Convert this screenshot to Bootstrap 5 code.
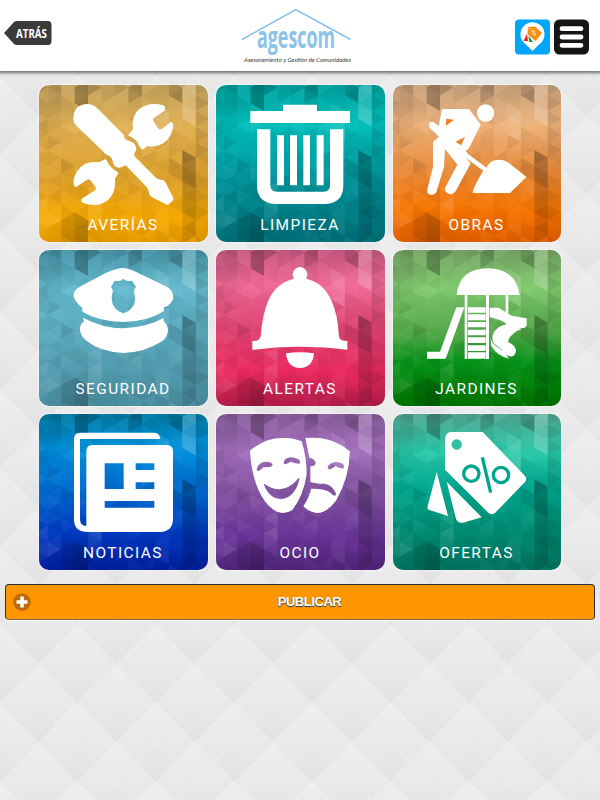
<!DOCTYPE html>
<html lang="es">
<head>
<meta charset="utf-8">
<meta name="viewport" content="width=device-width, initial-scale=1">
<title>agescom</title>
<link href="https://cdn.jsdelivr.net/npm/bootstrap@5.3.0/dist/css/bootstrap.min.css" rel="stylesheet">
<style>
body{min-height:800px;font-family:"Liberation Sans",Arial,sans-serif;background-color:#e8e8e8;
background-image:url("data:image/svg+xml,%3Csvg xmlns='http://www.w3.org/2000/svg' width='78.3' height='78.3' viewBox='0 0 78 78'%3E%3Cdefs%3E%3ClinearGradient id='g' x2='0' y2='1'%3E%3Cstop stop-color='%23eeeeee'/%3E%3Cstop offset='.6' stop-color='%23e8e8e8'/%3E%3Cstop offset='1' stop-color='%23e2e2e2'/%3E%3C/linearGradient%3E%3Cg id='d'%3E%3Cpath d='M0-39L39 0 0 39-39 0z' fill='url(%23g)'/%3E%3Cpath d='M-39 0L0-39 39 0M-19.500-19.500L19.500 19.500M19.500-19.500L-19.500 19.500' fill='none' stroke='%23fff' stroke-opacity='.3' stroke-width='.7'/%3E%3C/g%3E%3C/defs%3E%3Cuse href='%23d' x='39'/%3E%3Cuse href='%23d' x='39' y='78'/%3E%3Cuse href='%23d' y='39'/%3E%3Cuse href='%23d' x='78' y='39'/%3E%3C/svg%3E");background-position:-1px -1.400px}
.topbar{height:71px;padding:0 11px 0 4px;box-shadow:0 1px 3px 1px #68706a}
.logo-mark{margin-left:175px}
.tiles{width:522px;margin:14px auto 0;grid-template-columns:169px 169px 168px;grid-template-rows:157px 156px 156px;gap:8px}
.tile{border-radius:10px;color:#fff;font:15.400px/18px Roboto,sans-serif;letter-spacing:1.450px;padding-bottom:8px;box-shadow:0 0 1px 1px rgba(255,255,255,.45)}
.tile:hover{color:#fff}
.tile>svg{width:169px;height:157px}
.tile>span{z-index:1;padding-right:1px}
.t-averias{background:linear-gradient(#c6a45f,#e2b050 28%,#dda02a 60%,#f8aa00 85%,#e59b00)}
.t-limpieza{background:linear-gradient(#00a3a0,#00bfba 25%,#009399 60%,#006f79)}
.t-obras{background:linear-gradient(#c9a27d,#edb27a 25%,#e98a39 55%,#f87500 80%,#e25f00)}
.t-seguridad{background:linear-gradient(#4795a8,#64bace 25%,#56a3b6 65%,#4a8fa2)}
.t-alertas{background:linear-gradient(#c85882,#f06a95 22%,#dd416f 52%,#eb2b60 78%,#b51c49)}
.t-jardines{background:linear-gradient(#76a665,#80ca6d 25%,#51a747 53%,#069319 72%,#007400)}
.t-noticias{background:linear-gradient(#007ca4,#0092de 22%,#0069cf 50%,#0037be 78%,#001f9d)}
.t-ocio{background:linear-gradient(#8c5f9f,#a36fbd 25%,#8051a0 52%,#6b369a 78%,#51257b)}
.t-ofertas{background:linear-gradient(#51a893,#27c8a8 25%,#00a68d 48%,#008d74 75%,#00735e)}
.publish{width:590px;height:36px;margin:13.500px auto 0;background:#ff9600;border:1px solid #253038;border-bottom-color:#7c6a50;border-radius:4px;color:#fff;font-weight:700;font-size:13px;letter-spacing:-.45px;text-shadow:0 1px 1px #123a58;box-shadow:0 1px 0 #fff;padding:0 7px}
.publish:hover{color:#fff}
.publish>span{padding-left:1px}
</style>
</head>
<body>
<header class="topbar bg-white d-flex align-items-center">
 <a href="#" aria-label="Atrás" class="d-flex"><svg width="53" height="71" viewBox="4 0 53 71"><path d="M4 33L14 22Q15 21 17 21H48Q51.500 21 51.500 25V41Q51.500 45 48 45H17Q15 45 14 44Z" fill="#3b3b3b"/><text x="16" y="38" textLength="31" lengthAdjust="spacingAndGlyphs" font-family="Open Sans,sans-serif" font-weight="700" font-size="13" fill="#fff">ATRÁS</text></svg></a>
 <svg class="logo-mark" width="132" height="71" viewBox="232 0 132 71"><path d="M242 39.500L295.800 9.700 350.500 39.500" fill="none" stroke="#82c0ec" stroke-width="1.500"/><text x="257" y="48.300" textLength="78" lengthAdjust="spacingAndGlyphs" font-family="Open Sans,sans-serif" font-weight="700" font-size="29.500" fill="#8bc3ea">agescom</text><text x="244" y="62.300" textLength="107" lengthAdjust="spacingAndGlyphs" font-family="Lato,sans-serif" font-style="italic" font-weight="400" font-size="6.200" fill="#3a3a3a">Asesoramiento y Gestión de Comunidades</text></svg>
 <div class="d-flex ms-auto gap-1">
  <a href="#" aria-label="Ofertas cercanas" class="d-flex"><svg width="35" height="71" viewBox="515 0 35 71"><rect x="515" y="19.500" width="35" height="35" rx="4" fill="#00a6fa"/><path d="M532.500 51L524 42.800A12 12 0 1 1 541 42.800Z" fill="#fff"/><path d="M528 27L535 26.500 542 33 535.500 41 527.500 34Z" fill="#fa8b13"/><path d="M527 34L523.500 41H528Z" fill="#ed1c24"/><path d="M528.500 35.500L533 42H529Z" fill="#13a538"/><circle cx="529.300" cy="28.800" r=".8" fill="#fff"/><text x="531" y="35.500" transform="rotate(10 535 32)" font-family="Roboto,sans-serif" font-size="7.500" fill="#fff">%</text></svg></a>
  <a href="#" aria-label="Menú" class="d-flex"><svg width="35" height="71" viewBox="554 0 35 71"><rect x="554" y="19.500" width="35" height="35" rx="5.500" fill="#151515"/><path d="M562 28.700H581M562 37H581M562 45.300H581" stroke="#fff" stroke-width="4.800" stroke-linecap="round"/></svg></a>
 </div>
</header>
<main>
<nav class="tiles d-grid">
 <a href="#" class="tile t-averias position-relative overflow-hidden text-decoration-none d-flex justify-content-center align-items-end"><svg class="position-absolute top-0 start-0" viewBox="15 15 507 471"><g class="facets"></g><g fill="#fff"><path d="M118 118Q118 72 162 72Q179 73 193 88L270 165Q270 178 280 181Q300 185 306 200Q309 209 301 220V228L367 295Q377 300 389 301Q394 304 397 312L418 354Q420 359 415 363L404 373Q400 376 395 373L352 350Q345 346 345 339Q345 330 338 321L275 256Q255 269 243 259Q237 253 235 240Q230 226 220 226Q210 220 205 212L128 138Q118 128 118 118Z"/><path d="M282 166L297 148Q290 108 318 85Q350 65 387 76Q397 80 391 92L360 114Q355 118 359 124L372 145Q376 151 384 146L411 126Q419 125 417 145Q408 185 375 196Q355 202 341 198L325 209Q316 202 314 195Q308 178 282 166Z"/><path d="M214 237Q219 240 222 248Q228 262 254 278L243 297Q248 338 220 362Q190 382 150 370Q140 366 142 357L180 333Q188 329 185 322L168 299Q161 297 155 302L126 321Q115 320 120 294Q135 252 170 247L197 246Z"/></g></svg><span>AVERÍAS</span></a>

 <a href="#" class="tile t-limpieza position-relative overflow-hidden text-decoration-none d-flex justify-content-center align-items-end"><svg class="position-absolute top-0 start-0" viewBox="18 15 507 471"><g class="facets"></g><path fill="#fff" d="M121 93H219V74H321V93H420V129H121ZM141 148H181V316Q181 335 200 335H341Q360 335 360 316V148H400V316Q400 372 342 372H200Q141 372 141 316ZM201 166H222V316H201ZM240 166H261V316H240ZM280 166H300V316H280ZM320 166H341V316H320Z"/></svg><span>LIMPIEZA</span></a>

 <a href="#" class="tile t-obras position-relative overflow-hidden text-decoration-none d-flex justify-content-center align-items-end"><svg class="position-absolute top-0 start-0" viewBox="21 15 507 471"><g class="facets"></g><g fill="#fff"><circle cx="299" cy="99" r="26"/><path d="M168 87H249L284 134L248 206L239 212L246 222L302 263Q310 239 340 239Q356 239 369 249L421 291L372 339H260Q261 322 292 272L237 232L254 250L209 334Q200 347 184 340Q173 332 180 318L214 254L177 207L174 261L151 337Q143 348 129 343Q122 338 124 328L141 261V185L159 170L131 143Q126 134 132 127Q140 123 146 129L158 139Z"/><path fill="#f08020" d="M181 116L179 138L204 119ZM209 185L225 196L237 171Z"/></g></svg><span>OBRAS</span></a>

 <a href="#" class="tile t-seguridad position-relative overflow-hidden text-decoration-none d-flex justify-content-center align-items-end"><svg class="position-absolute top-0 start-0" viewBox="15 15 507 471"><g class="facets"></g><g fill="#fff"><path fill-rule="evenodd" d="M268 69Q285 69 325 90L398 125Q418 136 418 156Q416 178 390 187V198Q340 230 268 231Q196 230 145 200V188Q120 170 119 150Q120 135 136 126L215 84Q250 69 268 69ZM268 101Q262 110 242 107L231 126Q240 136 234 149Q228 190 268 205Q309 190 302 149Q297 136 306 126L294 107Q275 110 268 101Z"/><path d="M147 218Q205 249 268 250Q335 248 389 219V229Q402 240 402 257Q400 276 385 288Q330 323 268 324Q200 322 155 286Q136 268 138 248Q140 235 150 230Z"/></g></svg><span>SEGURIDAD</span></a>

 <a href="#" class="tile t-alertas position-relative overflow-hidden text-decoration-none d-flex justify-content-center align-items-end"><svg class="position-absolute top-0 start-0" viewBox="18 15 507 471"><g class="facets"></g><path fill="#fff" d="M252 101A22 22 0 1 1 288 101Q340 112 364 166Q384 210 387 276Q391 289 412 288V314Q340 304 270 305Q200 304 127 315V288Q149 290 152 274Q157 207 176 164Q201 112 252 101ZM228 325Q270 319 312 325Q308 369 270 369Q232 369 228 325Z"/></svg><span>ALERTAS</span></a>

 <a href="#" class="tile t-jardines position-relative overflow-hidden text-decoration-none d-flex justify-content-center align-items-end"><svg class="position-absolute top-0 start-0" viewBox="21 15 507 471"><g class="facets"></g><g fill="#fff"><path d="M212 150Q220 70 307 70Q390 72 401 150ZM211 187H235L179 341H123V320H162Z"/><path d="M236 150H244V342H236ZM300 150H309V342H300ZM359 150H367V300H359ZM246 187H299V203H246ZM246 208H299V226H246ZM246 231H299V247H246ZM246 254H299V271H246ZM246 277H299V294H246ZM246 301H299V318H246ZM246 322H299V341H246Z"/><path d="M311 188H338L377 212L422 220V240Q420 250 410 249L387 250L343 226L311 216Z"/><path d="M408 252Q375 262 364 291Q390 299 390 320Q382 343 363 330L358 337Q350 310 330 301Q316 290 320 270Q332 240 366 238ZM313 276Q317 298 337 307Q356 323 370 341Q334 334 316 303Z"/></g></svg><span>JARDINES</span></a>

 <a href="#" class="tile t-noticias position-relative overflow-hidden text-decoration-none d-flex justify-content-center align-items-end"><svg class="position-absolute top-0 start-0" viewBox="15 15 507 471"><g class="facets"></g><path fill="#fff" fill-rule="evenodd" d="M138 71H360Q378 72 379 90H138V331Q138 350 157 351V127Q157 108 176 108H398Q417 108 417 127V332Q415 367 379 369H157Q120 367 120 331V90Q120 72 138 71ZM212 163V240H269V163ZM305 163V183H361V163ZM305 220V240H361V220ZM212 276V296H361V276Z"/></svg><span>NOTICIAS</span></a>

 <a href="#" class="tile t-ocio position-relative overflow-hidden text-decoration-none d-flex justify-content-center align-items-end"><svg class="position-absolute top-0 start-0" viewBox="18 15 507 471"><g class="facets"></g><path fill="#fff" fill-rule="evenodd" d="M120 125Q165 86 220 87Q250 86 275 97Q290 145 290 196Q281 260 247 303Q233 312 219 312Q190 311 164 276Q125 220 120 125ZM141 178Q139 187 147 186L160 175L180 174Q190 171 187 164Q177 155 158 160Q144 166 141 178ZM221 160Q221 169 230 164L242 158Q258 164 268 164Q274 157 265 151Q242 138 225 151ZM161 225Q178 271 216 270Q256 265 269 208Q264 206 260 214Q217 261 163 225ZM286 87Q305 86 330 87Q382 94 420 127Q417 210 378 275Q349 313 320 312Q297 309 280 292Q300 260 303 239Q341 238 357 248L369 258Q377 264 378 254Q369 229 344 224Q322 226 301 219V171Q316 174 317 160Q310 147 298 146ZM353 172Q353 185 365 179L376 171Q388 178 399 179Q406 173 398 164Q371 151 353 172Z"/></svg><span>OCIO</span></a>

 <a href="#" class="tile t-ofertas position-relative overflow-hidden text-decoration-none d-flex justify-content-center align-items-end"><svg class="position-absolute top-0 start-0" viewBox="21 15 507 471"><g class="facets"></g><path fill="#fff" fill-rule="evenodd" d="M193 69H290L417 201Q424 210 417 219L327 312Q318 319 308 312L177 182V90Q178 72 193 69ZM212 91A15.500 15.500 0 1 0 212.100 91ZM152 189L186 321L128 302Q122 298 126 288ZM182 218L287 325L231 341Q214 344 209 326Z"/><g fill="none" stroke="#00a58d" stroke-width="10"><circle cx="256" cy="194" r="23"/><circle cx="345" cy="198" r="23"/><path d="M289 145L314 251"/></g></svg><span>OFERTAS</span></a>
</nav>
<a href="#" class="publish d-flex align-items-center text-decoration-none"><svg width="18" height="18" viewBox="0 0 18 18"><circle cx="9" cy="9" r="8.800" fill="#bd6904"/><path d="M9 3.500V14.500M3.500 9H14.500" stroke="#fff" stroke-width="3.600"/></svg><span class="flex-fill text-center">PUBLICAR</span></a>
</main>
<script src="https://cdn.jsdelivr.net/npm/bootstrap@5.3.0/dist/js/bootstrap.bundle.min.js"></script>
<script>
// Faceted overlay: columns of equilateral triangles, shaded light and dark.
const step = 40.4, side = 46.8;
const accents = [ // first column, last column, top, bottom, shade
  [-1,0,0,200,-.09],[2,2,0,80,-.22],[3,3,0,45,-.14],[6,6,0,65,-.2],[5,5,0,40,-.1],[8,8,0,55,-.08],[9,9,0,50,-.17],
  [10,10,0,125,.18],[11,11,0,500,-.09],[10,10,215,325,-.28],[10,10,325,480,-.17],[9,9,240,300,-.1],
  [1,1,400,500,-.14],[2,2,420,500,-.2],[1,1,240,300,-.08],[8,8,90,180,.12],[7,7,120,230,.08],[3,3,290,400,.07],[-1,0,365,430,.06]];
function noise(a, b) { const v = Math.sin(a * 12.9898 + b * 78.233) * 43758.5453; return v - Math.floor(v); }
let facets = '';
for (let c = -1; c < 12; c++) {
  const x0 = 41 + c * step, x1 = x0 + step;
  for (let r = -1; r < 23; r++) {
    const y = -24 + r * side / 2, mid = y + side / 2;
    const right = (r + c + 100) % 2 === 0;
    const pts = right ? `${x0},${y} ${x1},${mid} ${x0},${y + side}` : `${x1},${y} ${x0},${mid} ${x1},${y + side}`;
    let s = (noise(c + 3, r + 5) - .5) * .11;
    for (const [a, b, t, u, d] of accents) if (c >= a && c <= b && mid >= t && mid <= u) s += d;
    facets += `<polygon points="${pts}" fill="${s < 0 ? '#000' : '#fff'}" fill-opacity="${Math.abs(s).toFixed(3)}"/>`;
  }
}
document.querySelectorAll('.facets').forEach(g => g.innerHTML = facets);
</script>
</body>
</html>
